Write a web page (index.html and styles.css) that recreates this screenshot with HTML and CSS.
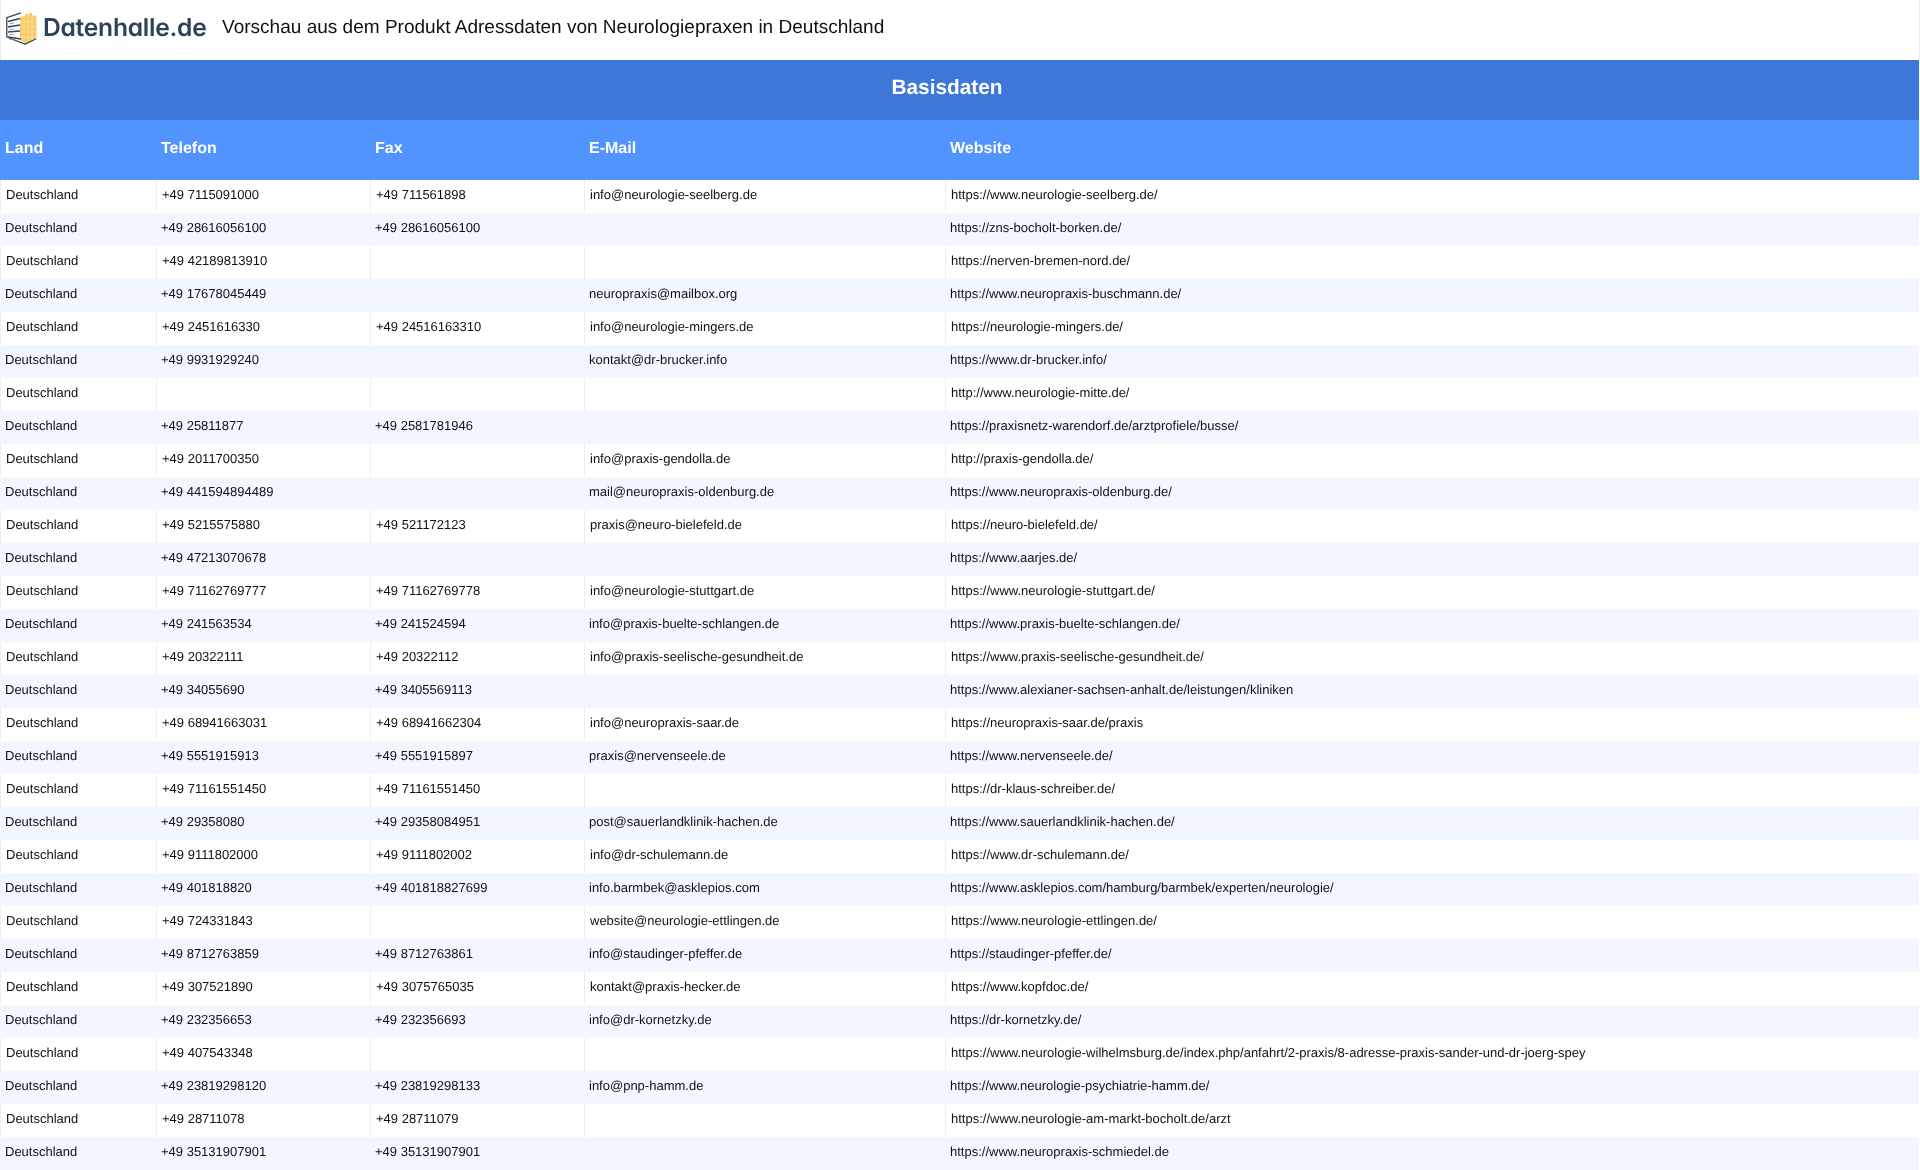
FILE: index.html
```html
<!DOCTYPE html>
<html lang="de">
<head>
<meta charset="utf-8">
<title>Vorschau</title>
<link rel="stylesheet" href="styles.css">
</head>
<body>
<header class="top">
  <div class="brand">
    <svg class="mark" viewBox="0 0 31 33" width="31" height="33" aria-hidden="true">
      <path class="hex" d="M15 .8 L.8 5.6 V25 L19 32.2 L30.2 26.6"/>
      <path class="cube" d="M14 5 L26 3 L30.5 8 V26 L19 31 L14 28 Z"/>
      <path class="grid" d="M18 4 V31 M22 3.5 V29.5 M26 3 V28 M14 10 H31 M14 15 H31 M14 20 H31 M14 25 H31"/>
      <path class="rack" d="M2 9.5 L14 6.5 M2 15 L14 13 M2 20 L14 19 M2 25 L15 27"/>
      <path class="rack-thin" d="M3 12 L8 11 M3 17.5 L8 17 M3 22.5 L8 22.5 M3 27 L8 28"/>
      <rect class="bit" x="23" y="1" width="3" height="3"/>
      <rect class="bit" x="27.5" y="3.5" width="3" height="3"/>
      <rect class="bit" x="19" y="2" width="3" height="3"/>
    </svg>
    <span class="brand-name">Datenhalle.de</span>
  </div>
  <h1 class="title">Vorschau aus dem Produkt Adressdaten von Neurologiepraxen in Deutschland</h1>
</header>
<table class="data">
  <colgroup>
    <col class="c-land"><col class="c-tel"><col class="c-fax"><col class="c-mail"><col class="c-web">
  </colgroup>
  <thead>
    <tr class="group"><th colspan="5">Basisdaten</th></tr>
    <tr class="heads"><th>Land</th><th>Telefon</th><th>Fax</th><th>E-Mail</th><th>Website</th></tr>
  </thead>
  <tbody>
    <tr><td>Deutschland</td><td>+49 7115091000</td><td>+49 711561898</td><td>info@neurologie-seelberg.de</td><td>https://www.neurologie-seelberg.de/</td></tr>
    <tr><td>Deutschland</td><td>+49 28616056100</td><td>+49 28616056100</td><td></td><td>https://zns-bocholt-borken.de/</td></tr>
    <tr><td>Deutschland</td><td>+49 42189813910</td><td></td><td></td><td>https://nerven-bremen-nord.de/</td></tr>
    <tr><td>Deutschland</td><td>+49 17678045449</td><td></td><td>neuropraxis@mailbox.org</td><td>https://www.neuropraxis-buschmann.de/</td></tr>
    <tr><td>Deutschland</td><td>+49 2451616330</td><td>+49 24516163310</td><td>info@neurologie-mingers.de</td><td>https://neurologie-mingers.de/</td></tr>
    <tr><td>Deutschland</td><td>+49 9931929240</td><td></td><td>kontakt@dr-brucker.info</td><td>https://www.dr-brucker.info/</td></tr>
    <tr><td>Deutschland</td><td></td><td></td><td></td><td>http://www.neurologie-mitte.de/</td></tr>
    <tr><td>Deutschland</td><td>+49 25811877</td><td>+49 2581781946</td><td></td><td>https://praxisnetz-warendorf.de/arztprofiele/busse/</td></tr>
    <tr><td>Deutschland</td><td>+49 2011700350</td><td></td><td>info@praxis-gendolla.de</td><td>http://praxis-gendolla.de/</td></tr>
    <tr><td>Deutschland</td><td>+49 441594894489</td><td></td><td>mail@neuropraxis-oldenburg.de</td><td>https://www.neuropraxis-oldenburg.de/</td></tr>
    <tr><td>Deutschland</td><td>+49 5215575880</td><td>+49 521172123</td><td>praxis@neuro-bielefeld.de</td><td>https://neuro-bielefeld.de/</td></tr>
    <tr><td>Deutschland</td><td>+49 47213070678</td><td></td><td></td><td>https://www.aarjes.de/</td></tr>
    <tr><td>Deutschland</td><td>+49 71162769777</td><td>+49 71162769778</td><td>info@neurologie-stuttgart.de</td><td>https://www.neurologie-stuttgart.de/</td></tr>
    <tr><td>Deutschland</td><td>+49 241563534</td><td>+49 241524594</td><td>info@praxis-buelte-schlangen.de</td><td>https://www.praxis-buelte-schlangen.de/</td></tr>
    <tr><td>Deutschland</td><td>+49 20322111</td><td>+49 20322112</td><td>info@praxis-seelische-gesundheit.de</td><td>https://www.praxis-seelische-gesundheit.de/</td></tr>
    <tr><td>Deutschland</td><td>+49 34055690</td><td>+49 3405569113</td><td></td><td>https://www.alexianer-sachsen-anhalt.de/leistungen/kliniken</td></tr>
    <tr><td>Deutschland</td><td>+49 68941663031</td><td>+49 68941662304</td><td>info@neuropraxis-saar.de</td><td>https://neuropraxis-saar.de/praxis</td></tr>
    <tr><td>Deutschland</td><td>+49 5551915913</td><td>+49 5551915897</td><td>praxis@nervenseele.de</td><td>https://www.nervenseele.de/</td></tr>
    <tr><td>Deutschland</td><td>+49 71161551450</td><td>+49 71161551450</td><td></td><td>https://dr-klaus-schreiber.de/</td></tr>
    <tr><td>Deutschland</td><td>+49 29358080</td><td>+49 29358084951</td><td>post@sauerlandklinik-hachen.de</td><td>https://www.sauerlandklinik-hachen.de/</td></tr>
    <tr><td>Deutschland</td><td>+49 9111802000</td><td>+49 9111802002</td><td>info@dr-schulemann.de</td><td>https://www.dr-schulemann.de/</td></tr>
    <tr><td>Deutschland</td><td>+49 401818820</td><td>+49 401818827699</td><td>info.barmbek@asklepios.com</td><td>https://www.asklepios.com/hamburg/barmbek/experten/neurologie/</td></tr>
    <tr><td>Deutschland</td><td>+49 724331843</td><td></td><td>website@neurologie-ettlingen.de</td><td>https://www.neurologie-ettlingen.de/</td></tr>
    <tr><td>Deutschland</td><td>+49 8712763859</td><td>+49 8712763861</td><td>info@staudinger-pfeffer.de</td><td>https://staudinger-pfeffer.de/</td></tr>
    <tr><td>Deutschland</td><td>+49 307521890</td><td>+49 3075765035</td><td>kontakt@praxis-hecker.de</td><td>https://www.kopfdoc.de/</td></tr>
    <tr><td>Deutschland</td><td>+49 232356653</td><td>+49 232356693</td><td>info@dr-kornetzky.de</td><td>https://dr-kornetzky.de/</td></tr>
    <tr><td>Deutschland</td><td>+49 407543348</td><td></td><td></td><td>https://www.neurologie-wilhelmsburg.de/index.php/anfahrt/2-praxis/8-adresse-praxis-sander-und-dr-joerg-spey</td></tr>
    <tr><td>Deutschland</td><td>+49 23819298120</td><td>+49 23819298133</td><td>info@pnp-hamm.de</td><td>https://www.neurologie-psychiatrie-hamm.de/</td></tr>
    <tr><td>Deutschland</td><td>+49 28711078</td><td>+49 28711079</td><td></td><td>https://www.neurologie-am-markt-bocholt.de/arzt</td></tr>
    <tr><td>Deutschland</td><td>+49 35131907901</td><td>+49 35131907901</td><td></td><td>https://www.neuropraxis-schmiedel.de</td></tr>
  </tbody>
</table>
</body>
</html>
```
FILE: styles.css
```css
html, body { margin: 0; padding: 0; background: #fff; }
body { font-family: "Liberation Sans", Arial, sans-serif; color: #111; height: 1170px; overflow: hidden; text-rendering: geometricPrecision; will-change: transform; }
.top { display: flex; align-items: center; height: 60px; padding-left: 5px; box-sizing: border-box; border-left: 1px solid #eee; border-right: 1px solid #eee; }
.brand { display: flex; align-items: center; gap: 6px; width: 216px; margin-top: -6px; }
.mark { display: block; flex: none; margin-top: 3px; }
.hex { fill: none; stroke: #33475b; stroke-width: 1.3; stroke-linejoin: round; }
.cube { fill: #fbc964; }
.rack { fill: none; stroke: #33475b; stroke-width: 1.5; }
.rack-thin { fill: none; stroke: #8a98a6; stroke-width: .9; }
.grid { fill: none; stroke: #fde6ae; stroke-width: .7; }
.bit { fill: #fbc964; }
.brand-name { font-family: "Inter", sans-serif; font-weight: 600; font-size: 24.6px; letter-spacing: -.25px; color: #2d4256; line-height: 1; font-feature-settings: "cv11"; }
.title { margin: -3px 0 0; font-size: 19.04px; font-weight: 400; color: #111; line-height: 1.2; }
.data { width: calc(100% - 1px); border-collapse: separate; border-spacing: 0; table-layout: fixed; font-size: 13px; }
.c-land { width: 156px; }
.c-tel, .c-fax { width: 214px; }
.c-mail { width: 361px; }
.group th { height: 60px; background: #3d78d8; color: #fff; font-size: 20.8px; font-weight: 700; text-align: center; padding: 0 25px 5px 0; box-sizing: border-box; }
.heads th { height: 60px; background: #5193ff; color: #fff; font-size: 16px; font-weight: 700; text-align: left; padding: 0 5px 2px; box-sizing: border-box; }
tbody td { height: 33px; padding: 0 5px; box-sizing: border-box; white-space: nowrap; overflow: hidden; line-height: 30px; vertical-align: top; }
tbody tr:nth-child(odd) td { background: #fff; border-left: 1px solid #eee; }
tbody tr:nth-child(even) td { background: #f2f6fe; }
```
